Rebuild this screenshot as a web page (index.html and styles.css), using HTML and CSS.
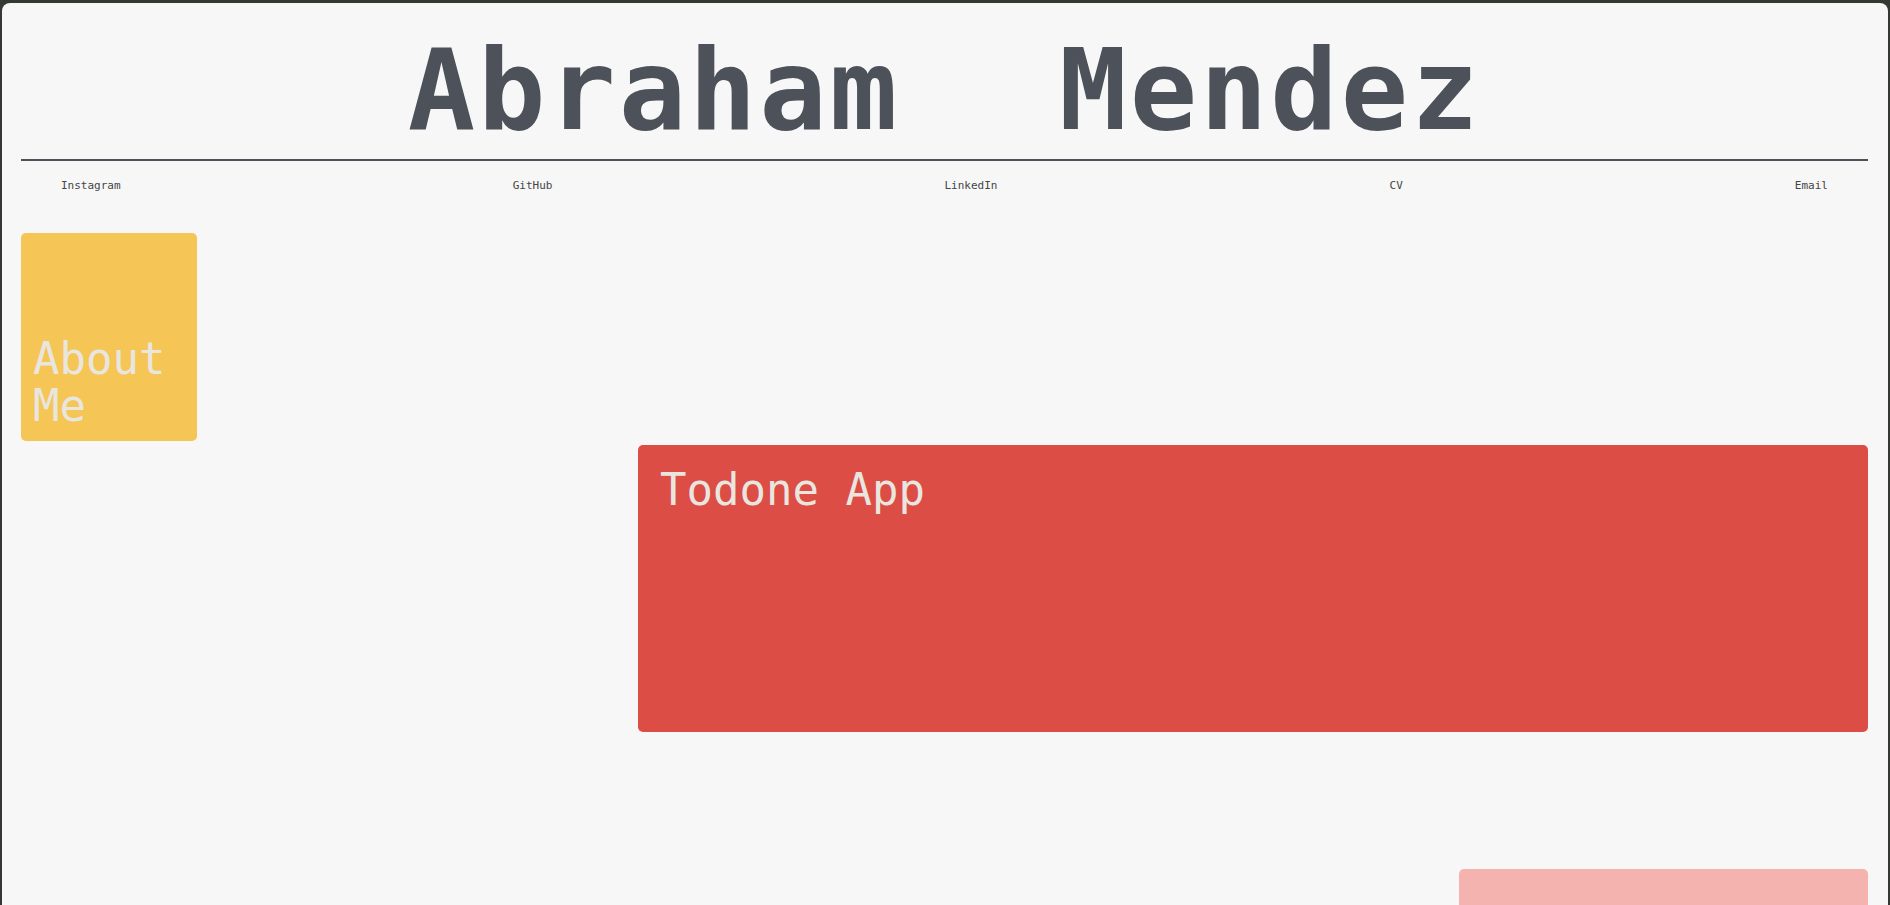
FILE: index.html
```html
<!DOCTYPE html>
<html lang="en">
<head>
<meta charset="utf-8">
<title>Abraham Mendez</title>
<link rel="stylesheet" href="styles.css">
</head>
<body>
<div class="page">
  <header class="header">
    <h1 class="title">Abraham Mendez</h1>
    <hr class="rule">
    <nav class="nav">
      <a class="nav-link" href="#">Instagram</a>
      <a class="nav-link" href="#">GitHub</a>
      <a class="nav-link" href="#">LinkedIn</a>
      <a class="nav-link" href="#">CV</a>
      <a class="nav-link" href="#">Email</a>
    </nav>
  </header>
  <main class="cards">
    <section class="card card-about">About Me</section>
    <section class="card card-todone">Todone App</section>
    <section class="card card-extra"></section>
  </main>
</div>
</body>
</html>
```

FILE: styles.css
```css
html, body {
  margin: 0;
  padding: 0;
  background: #343933;
}

.page {
  margin: 3px 2px 0 2px;
  padding: 0 20px 40px 19px;
  background: #f7f7f7;
  border-radius: 8px 8px 0 0;
  min-height: 1100px;
  font-family: "DejaVu Sans Mono", "Liberation Mono", monospace;
}

.title {
  margin: 0;
  padding-top: 31px;
  font-family: "DejaVu Sans Mono", "Liberation Mono", monospace;
  font-weight: 700;
  font-size: 112px;
  line-height: 112px;
  letter-spacing: 2.9px;
  word-spacing: 89px;
  text-align: center;
  color: #4d525a;
}

.rule {
  margin: 13px 0 0;
  border: 0;
  height: 2px;
  background: #4d525a;
}

.nav {
  display: flex;
  justify-content: space-between;
  padding: 0 40px;
  margin-top: 18px;
  font-size: 11px;
  line-height: 13px;
}

.nav-link {
  color: #454545;
  text-decoration: none;
}

.cards {
  display: flex;
  flex-direction: column;
  margin-top: 41px;
}

.card {
  box-sizing: border-box;
  border-radius: 5px;
  color: #e9e6e0;
  font-size: 44px;
  line-height: 47px;
}

.card-about {
  width: 176px;
  height: 208px;
  padding: 12px;
  display: flex;
  align-items: flex-end;
  background: #f5c556;
}

.card-todone {
  align-self: flex-end;
  width: 1230px;
  height: 287px;
  margin-top: 4px;
  padding: 21px 22px;
  background: #dc4d45;
}

.card-extra {
  align-self: flex-end;
  width: 409px;
  height: 200px;
  margin-top: 137px;
  background: #f4b3ae;
}
```
